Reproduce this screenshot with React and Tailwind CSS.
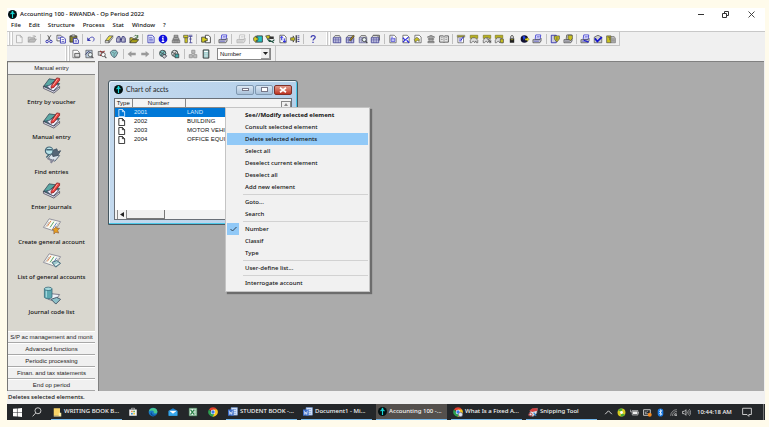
import { useState } from 'react'
import clsx from 'clsx'

/* ---------- small toolbar drawings, all on a 16 grid ---------- */

const Svg = ({ children, className = 'w-[11px] h-[11px]', box = '0 0 16 16' }) => (
  <svg viewBox={box} className={clsx('block shrink-0', className)} aria-hidden="true">{children}</svg>
)

const Page = ({ line = '#444', fill = '#fff' }) => (
  <path d="M3 2h7l3 3v9H3z" fill={fill} stroke={line} strokeWidth="1.2" />
)

const Printer = ({ c = '#2222cc', b = '#444', f = '#c4c4d0' }) => (
  <>
    <path d="M6 1.5h8l-1 7H5z" fill="#fff" stroke={c} strokeWidth="1.2" />
    <path d="M7.5 4h5M7 6h5" stroke={c} strokeWidth=".8" />
    <path d="M1.5 9h11l2-2v4l-2 3h-11z" fill={f} stroke={b} strokeWidth="1.1" />
    <path d="M3 11.5h8" stroke={c} strokeWidth=".8" />
  </>
)

const Ledger = ({ c = '#3a3a90' }) => (
  <>
    <path d="M2 6l3-3.5h7L14 6" fill="#ddd" stroke="#555" strokeWidth="1.2" />
    <path d="M2 6h12v8H2z" fill="#dfe0f0" stroke={c} strokeWidth="1.3" />
    <path d="M2 8.5h12M2 11h12M6 6v8M10 6v8" stroke={c} strokeWidth=".8" />
  </>
)

const Stamp = ({ c = '#666', f = '#b4b4b4' }) => (
  <>
    <path d="M5 2h6v3H5zM4 6h8l1 3H3z" fill={f} stroke={c} strokeWidth="1.2" />
    <path d="M2 10h12v4H2zM5 10v4M8 10v4M11 10v4" fill={f} stroke={c} strokeWidth="1.2" />
  </>
)

const Hand = ({ children }) => (
  <>
    <path d="M2 2h12v5H2z" fill="#b8b020" stroke="#77721c" strokeWidth="1" />
    <path d="M2 10l3-4h5l4 4v4h-2l-1-3-2 3-2-3-3 3H2z" fill="#ddd" stroke="#555" strokeWidth="1.1" />
    {children}
  </>
)

const Lens = ({ c = '#444', f = '#e8f4f4' }) => (
  <>
    <circle cx="10" cy="9" r="3.2" fill={f} stroke={c} strokeWidth="1.3" />
    <path d="M12 11.5l3 3" stroke={c} strokeWidth="1.8" />
  </>
)

const Globe = ({ c = '#3c4444', f = '#7cc4c4' }) => (
  <>
    <circle cx="7.5" cy="7" r="5" fill={f} stroke={c} strokeWidth="1.4" />
    <path d="M3 5l4 2 4-4M5 11l2-4 4 2" stroke={c} strokeWidth="1.2" fill="none" />
  </>
)

const fileTools = [
  [
    ['New', <path d="M4 2h6l3 3v9H4zM10 2v3h3" fill="#f4f4f4" stroke="#aaa" strokeWidth="1.2" />],
    ['Open', <><path d="M2 13V5h4l1 1h5v2" fill="#ccc" stroke="#999" strokeWidth="1.2" /><path d="M2 13l3-5h10l-3 5zM9 3h4l1 2" fill="#bbb" stroke="#999" /></>],
  ],
  [
    ['Cut', <><path d="M6 2l4 8M11 2L6 10" stroke="#444" strokeWidth="1.3" /><circle cx="5" cy="12" r="2" fill="none" stroke="#22a" strokeWidth="1.4" /><circle cx="11" cy="12" r="2" fill="none" stroke="#22a" strokeWidth="1.4" /></>],
    ['Copy', <><path d="M1.5 2h6l2 2v7h-8z" fill="#fff" stroke="#444" strokeWidth="1.2" /><path d="M7 5h5l3 3v6.5H7z" fill="#fff" stroke="#22a" strokeWidth="1.3" /><path d="M3 5h3M3 7h3M9 9h4M9 12h4" stroke="#22a" /></>],
    ['Paste', <><path d="M1.5 3h11v10h-11z" fill="#8a8430" stroke="#333" strokeWidth="1.3" /><path d="M4.5 1.5h5v3h-5z" fill="#ddd" stroke="#333" /><path d="M7 7h5l3 2.5V15H7z" fill="#fff" stroke="#22a" strokeWidth="1.3" /><path d="M9 10h4M9 12.5h4" stroke="#22a" /></>],
  ],
  [['Undo', <><path d="M5 8c2-4 8-4 8 0 0 2-1 3-2 4" fill="none" stroke="#3a3ab0" strokeWidth="1.4" /><path d="M2 5v6h6z" fill="#3a3ab0" /></>]],
  [
    ['Erase', <><path d="M2 11l6-8h6l-6 8z" fill="#e8dc3c" stroke="#555" strokeWidth="1.2" /><path d="M2 11h6v3H2zM8 11l6-8v3l-6 8z" fill="#fff" stroke="#555" strokeWidth="1.2" /></>],
    ['Find', <><path d="M1 7l2-3h3l1 3v6H1zM9 7l1-3h3l2 3v6H9z" fill="#99b" stroke="#333377" strokeWidth="1.2" /><path d="M7 7h2v3H7z" fill="#226" /><path d="M3 8v4M11 8v4" stroke="#fff" /></>],
    ['Load', <><path d="M1.5 14V6h4l1 1.5h6V9" fill="#d8cc30" stroke="#333" strokeWidth="1.2" /><path d="M1.5 14l3-5h11l-4 5z" fill="#a8a018" stroke="#333" strokeWidth="1.2" /><path d="M8 4c2-3 4-2 5 0l1-2v4h-4" fill="none" stroke="#252" strokeWidth="1.2" /></>],
  ],
  [
    ['Document', <><Page line="#3030aa" fill="#dfe4ff" /><path d="M5 6h5M5 8.5h6M5 11h6" stroke="#3030aa" /></>],
    ['Information', <><circle cx="8" cy="8" r="7" fill="#1010dd" /><path d="M8 3v2.2M6.5 7H8v5M6 12h4" stroke="#fff" strokeWidth="1.8" fill="none" /></>],
    ['Stamp', <Stamp />],
    ['Adjust', <><path d="M1 2h7v4H1z" fill="#d4cc20" stroke="#444" /><path d="M3 6h4v8H3z" fill="#d4cc20" stroke="#444" /><path d="M9 2h6M9 4h6M12 4v10M10 14h5M10 8h4" stroke="#3a3a90" strokeWidth="1.2" /></>],
  ],
  [['Transfer', <><path d="M7 2h5l3 3v9H7z" fill="#fff" stroke="#333" strokeWidth="1.3" /><path d="M1 5h6v2h3v4H6v2H1z" fill="#d4cc20" stroke="#333" strokeWidth="1.2" /></>]],
  [['Print', <Printer />]],
  [['Preview', <Printer c="#b4b4b4" b="#aaa" f="#ddd" />]],
  [
    ['Import', <><path d="M6 3h9v10H6z" fill="#22c4c4" stroke="#333" strokeWidth="1.3" /><path d="M1 6l4-3v3h3v4H5v4l-4-4z" fill="#d4cc20" stroke="#333" /></>],
    ['Export', <><path d="M1 3l6-1 2 4-5 2z" fill="#c8c020" stroke="#333" /><path d="M7 4h7v4H7z" fill="#333" /><path d="M6 9l8 5M4 8l3 4h5l3-3" stroke="#254" strokeWidth="1.8" fill="none" /></>],
    ['Sort', <><Page /><path d="M6 4v6M4 6l2-2 2 2M10 7v6M8 11l2 2 3-2" stroke="#1212dd" strokeWidth="1.5" fill="none" /></>],
    ['Move', <><path d="M1 6h4V3l3 5-3 5v-3H1z" fill="#c8c020" stroke="#333" /><path d="M9 2h2v12H9z" fill="#333" /><path d="M12 3h3M12 6h3M12 9h3M12 12h3" stroke="#3a3a90" strokeWidth="1.5" /></>],
  ],
  [['Help', <path d="M5 5.5c0-4 6.5-4 6.5-.5C11.5 7.5 8 7.5 8 10.5M8 12.5v2" fill="none" stroke="#3a3ab0" strokeWidth="2" />]],
]

const accountTools = [
  [
    ['Accounts', <Ledger />],
    ['Edit accounts', <><Ledger /><path d="M7 10l6-8 2 1-6 8z" fill="#c8a020" stroke="#222" /></>],
    ['Search accounts', <><Ledger c="#666699" /><Lens /></>],
    ['Copy accounts', <><path d="M5 2h10v8H5z" fill="#ddd" stroke="#333" strokeWidth="1.2" /><Ledger /></>],
  ],
  [
    ['Report', <><Page line="#555" /><path d="M5 5h3M5 7h6v5H5zM5 9.5h6" stroke="#22c" fill="none" /></>],
    ['Percent', <><Page line="#555" /><path d="M3 6l3 3M3 13l9-8M9 10l4 4" stroke="#2222dd" strokeWidth="1.8" /></>],
    ['Return', <><Page line="#555" /><path d="M2 9l4-4 4 3v4l-3-2-3 3z" fill="#c8c020" stroke="#555" /></>],
    ['Bank', <><path d="M2 5l6-3 6 3zM3 12h10v2H3z" fill="#aaa" stroke="#666" /><path d="M5 6v6M8 6v6M11 6v6M3 8h10" stroke="#666" strokeWidth="1.5" /></>],
    ['Book', <><path d="M1 3h6l1 1 1-1h6v10H9l-1 1-1-1H1z" fill="#eee" stroke="#444" strokeWidth="1.3" /><path d="M8 4v10M3 6h3M3 9h3M10 6h3M10 9h3" stroke="#666" /></>],
  ],
  [
    ['Form', <><path d="M2 2h12v3H2z" fill="#b8b020" stroke="#777" /><path d="M3 5h9v9H3z" fill="#fff" stroke="#444" /><path d="M5 8h4M5 11h4M12 4l-4 6" stroke="#22c" strokeWidth="1.4" /></>],
    ['Receive', <Hand />],
    ['Check', <Hand><path d="M8 7l6 6" stroke="#333" strokeWidth="1.5" /></Hand>],
    ['Pay', <Hand><path d="M10 8h5v6h-5z" fill="#c8c020" stroke="#444" /></Hand>],
    ['Lock', <><path d="M6 7V4c0-2 4-2 4 0v3" stroke="#444" strokeWidth="1.5" fill="none" /><path d="M4.5 7h7v7h-7z" fill="#222" /><path d="M6 9h4" stroke="#c8c020" /></>],
    ['Closing', <><circle cx="7" cy="8" r="6" fill="#111133" /><path d="M4 4l3-1 2 3-3 4z" fill="#2244ee" /><path d="M8 7h3V5l4 3.5L11 12v-2H8z" fill="#e8dc20" stroke="#333" strokeWidth=".5" /></>],
    ['Print journal', <Printer />],
  ],
  [
    ['Budget', <><path d="M2 2h8v12H2z" fill="#ccd" stroke="#22a" strokeWidth="1.3" /><path d="M7 3h8v5l-4 5-4-5z" fill="#c8c020" stroke="#444" /><path d="M11 5v5" stroke="#444" /></>],
    ['Print budget', <><Printer c="#444" /><path d="M8 2h7v5l-3 4-4-4z" fill="#c8c020" stroke="#444" /></>],
  ],
  [
    ['Print ledger', <><Printer /><path d="M6 10l8 3" stroke="#22c" strokeWidth="2" /></>],
    ['Validate', <><path d="M2 5l6-3 6 3v9H2z" fill="#ccc" stroke="#555" strokeWidth="1.2" /><path d="M3 7l4 5 7-7" stroke="#1212cc" strokeWidth="2.8" fill="none" /></>],
    ['Lists', <><path d="M1 3h7v11H1z" fill="#c8c020" stroke="#444" /><path d="M3 5h3v5" stroke="#444" fill="none" /><path d="M8 4h5l2 3v7H8z" fill="#bbb" stroke="#666" /><path d="M9 8h5M9 11h5" stroke="#666" /></>],
  ],
]

const navTools = [
  [
    ['View page', <><Page line="#666" /><path d="M6 7h8v6H6z" fill="#ddd" stroke="#444" strokeWidth="1.3" /></>],
    ['Search page', <><path d="M3 2h10v12H3z" fill="#bcd" stroke="#444" /><path d="M2 9l5-5 5 3" stroke="#336" strokeWidth="1.4" fill="none" /><Lens c="#555" /></>],
    ['Delete page', <><path d="M2 4h8v6H2z" fill="#ccc" stroke="#444" /><path d="M5 3l8 7M12 3l-7 8" stroke="#a03030" strokeWidth="1.8" /><Lens c="#555" f="#fff" /></>],
    ['Refresh', <><path d="M2 5l4-3h5l3 4-3 6-3 2-4-4z" fill="#8cc8c8" stroke="#456" strokeWidth="1.3" /><path d="M5 5l4 2 3-2M8 13V8" stroke="#567" fill="none" /></>],
  ],
  [
    ['Previous', <path d="M1 8l6-5v3h7v4H7v3z" fill="#999" />],
    ['Next', <path d="M15 8L9 3v3H2v4h7v3z" fill="#999" />],
  ],
  [
    ['Link', <><Globe /><path d="M9 8l5 3-4 4-3-3z" fill="#ccc" stroke="#334" strokeWidth="1.2" /></>],
    ['Relink', <><Globe f="#ddd" /><path d="M8 8h6v6H8z" fill="#4aa" stroke="#333" strokeWidth="1.2" /></>],
  ],
  [
    ['Group', <path d="M6 2h5v5H6zM2 9h5v5H2zM9 9h5v5H9z" fill="#bbb" stroke="#999" strokeWidth="1.5" />],
    ['Calculator', <><path d="M3.5 1.5h9v13h-9z" fill="#9cc" stroke="#333" strokeWidth="1.5" /><path d="M5 3h6v2H5z" fill="#fff" /><path d="M5.5 7.5h5M5.5 10h5M5.5 12.5h5" stroke="#eee" /></>],
  ],
]

/* ---------- sidebar drawings, 20 grid ---------- */

const PenBook = () => (
  <>
    <path d="M1 11l7-6 10 3-6 8z" fill="#3c8484" stroke="#345" strokeWidth=".8" />
    <path d="M1 11l6-8 7 1-7 6z" fill="#5aa8a4" stroke="#345" strokeWidth=".8" />
    <path d="M5 11l6-3 6 2-6 6z" fill="#f0f0fa" stroke="#668" strokeWidth=".8" />
    <path d="M1 11l11 5 6-5v2l-6 5-11-5z" fill="#dde" stroke="#334" strokeWidth=".7" />
    <path d="M9 11l6-9 3 .5v2L12 12l-3 1z" fill="#e84040" stroke="#711" strokeWidth=".7" />
    <path d="M11 10l5-7" stroke="#ffb0a0" />
  </>
)

const FindBook = () => (
  <>
    <path d="M9 9l9 1-5 6-7-3z" fill="#dce4ec" stroke="#567" />
    <path d="M10 5l5-2 1 3 3-1-3 5-5 1z" fill="#567" stroke="#456" />
    <circle cx="7" cy="5" r="4" fill="#b8e4ea" stroke="#467" strokeWidth="1.2" />
    <path d="M4 4h6M7 9l-3 3" stroke="#467" strokeWidth="1.5" />
    <path d="M5 13l4 2v3M12 14l-3 4" stroke="#889" strokeWidth="1.5" fill="none" />
  </>
)

const Sheet = ({ children }) => (
  <>
    <path d="M1 12L7 3l12 3-6 10z" fill="#fbfbf4" stroke="#778" strokeWidth=".8" />
    <path d="M5 11l4-6" stroke="#e08040" />
    <path d="M8 12l4-6" stroke="#50a060" />
    <path d="M11 13l4-6" stroke="#6080c0" />
    <path d="M3 12l4-6M13 14l4-7" stroke="#bbb" />
    {children}
  </>
)

const CreateSheet = () => (
  <Sheet><path d="M14 11l1 2h3l-2 2 1 3-3-1-2 2v-4l-2-1 3-1z" fill="#e8a020" stroke="#853" strokeWidth=".6" /></Sheet>
)

const ListSheet = () => (
  <Sheet><path d="M10 12l5-2 4 3-5 4z" fill="#9cc8cc" stroke="#467" /><path d="M13 15l4-2" stroke="#fff" /></Sheet>
)

const JournalCan = () => (
  <>
    <path d="M8 8l10 1-5 7-7-2z" fill="#eef2f8" stroke="#778" />
    <path d="M2 3v9c2 2 6 2 8 0V3z" fill="#5ca8b0" stroke="#367" strokeWidth=".8" />
    <ellipse cx="6" cy="3" rx="4" ry="1.8" fill="#a4d8dc" stroke="#367" strokeWidth=".8" />
    <path d="M9 14l6-2 4 2-5 5z" fill="#8cc0c8" stroke="#456" />
    <path d="M4 5v7" stroke="#b8e4e8" />
  </>
)

const shortcuts = [
  { label: 'Entry by voucher', art: PenBook },
  { label: 'Manual entry', art: PenBook },
  { label: 'Find entries', art: FindBook },
  { label: 'Enter journals', art: PenBook },
  { label: 'Create general account', art: CreateSheet },
  { label: 'List of general accounts', art: ListSheet },
  { label: 'Journal code list', art: JournalCan },
]

const sections = [
  'S/P ac management and monit',
  'Advanced functions',
  'Periodic processing',
  'Finan. and tax statements',
  'End op period',
]

const accounts = [
  { number: '2001', name: 'LAND' },
  { number: '2002', name: 'BUILDING' },
  { number: '2003', name: 'MOTOR VEHI' },
  { number: '2004', name: 'OFFICE EQUI' },
]

const menuGroups = [
  ['See//Modify selected element', 'Consult selected element', 'Delete selected elements', 'Select all',
    'Deselect current element', 'Deselect all', 'Add new element'],
  ['Goto...', 'Search'],
  ['Number', 'Classif', 'Type'],
  ['User-define list...'],
  ['Interrogate account'],
]

const AppMark = ({ className = 'w-[9px] h-[9px]' }) => (
  <Svg className={className}>
    <circle cx="8" cy="8" r="8" fill="#031012" />
    <path d="M8 5v9M4.5 7.5L8 4l3.5 3.5" stroke="#18d8d8" strokeWidth="2" fill="none" />
    <circle cx="8" cy="3" r="1.5" fill="#18d8d8" />
  </Svg>
)

function Grip() {
  return (
    <div className="flex gap-[1px] pl-[1px] shrink-0 self-stretch">
      <span className="w-[2px] border-l border-white bg-[#c8c8c8]" />
      <span className="w-[2px] border-l border-white bg-[#c8c8c8]" />
    </div>
  )
}

function Tools({ groups, className }) {
  return (
    <div className={clsx('flex items-center', className)}>
      {groups.map((group, i) => (
        <div key={i} className="contents">
          {i > 0 && <span className="w-[5px] shrink-0 flex justify-center"><i className="w-px h-[10px] bg-[#c0c0c0]" /></span>}
          {group.map(([label, art]) => (
            <button key={label} type="button" aria-label={label} className="flex-1 min-w-0 h-[12px] flex items-center justify-center">
              <Svg className="w-[10px] h-[10px]">{art}</Svg>
            </button>
          ))}
        </div>
      ))}
    </div>
  )
}

function Sidebar() {
  return (
    <aside className="w-[88px] shrink-0 flex flex-col bg-[#d9d7cf] border-l border-t border-[#777] pt-[1px]">
      <button type="button" className="h-[12px] shrink-0 flex items-center justify-center bg-[#f0f0f0] border-b border-[#8a8a8a] font-['Liberation_Sans'] text-[#222]">
        Manual entry
      </button>
      <nav className="flex-1 flex flex-col">
        {shortcuts.map(({ label, art: Art }) => (
          <button key={label} type="button" className="h-[35px] shrink-0 flex flex-col items-center gap-[3px] pt-[1px] whitespace-nowrap">
            <Svg className="w-[20px] h-[19px]" box="0 0 20 20"><Art /></Svg>
            <span>{label}</span>
          </button>
        ))}
      </nav>
      {sections.map((s) => (
        <button key={s} type="button" className="h-[12px] shrink-0 flex items-center justify-center bg-[#f0f0f0] border-t border-white border-b border-b-[#a8a8a8] whitespace-nowrap font-['Liberation_Sans'] text-[#222]">
          {s}
        </button>
      ))}
    </aside>
  )
}

function AccountsWindow() {
  const [selected, setSelected] = useState('2001')
  return (
    <section className="absolute left-[9px] top-[18px] w-[190px] h-[145px] flex flex-col rounded-t-[3px] border border-[#45565f] bg-gradient-to-r from-[#c3d9ee] to-[#b5d0ea] shadow-[inset_-1px_-1px_0_#4cc8e8,inset_1px_1px_0_#e8f4fc] px-[5px] pb-1">
      <header className="h-[17px] shrink-0 flex items-center">
        <AppMark />
        <h2 className="flex-1 pl-[3px] font-['Lato'] text-[7px] text-[#333]">Chart of accts</h2>
        <div className="flex gap-[1px]">
          <button type="button" aria-label="Minimize" className="w-[18px] h-[10px] rounded-[2px] border border-[#8098b0] bg-gradient-to-b from-[#dce8f4] to-[#a8c0d8] flex items-center justify-center">
            <i className="w-[7px] h-[3px] bg-white border border-[#778]" />
          </button>
          <button type="button" aria-label="Maximize" className="w-[18px] h-[10px] rounded-[2px] border border-[#8098b0] bg-gradient-to-b from-[#dce8f4] to-[#a8c0d8] flex items-center justify-center">
            <i className="w-[7px] h-[5px] bg-white border border-[#778]" />
          </button>
          <button type="button" aria-label="Close" className="w-[18px] h-[10px] rounded-[2px] border border-[#803028] bg-gradient-to-b from-[#e09a8c] to-[#bc3020] flex items-center justify-center">
            <Svg className="w-[8px] h-[6px]" box="0 0 10 8"><path d="M1 1l8 6M9 1L1 7" stroke="#fff" strokeWidth="2.2" /></Svg>
          </button>
        </div>
      </header>
      <div className="relative flex-1 min-h-0 flex flex-col bg-white border border-[#6a7078] overflow-hidden font-['Liberation_Sans'] text-[#111]">
        <table className="w-full table-fixed border-collapse">
          <thead>
            <tr className="h-[8px] bg-[#f4f4f4] leading-[8px]">
              <th scope="col" className="w-[17px] p-0 font-normal border-r border-b border-[#888]">Type</th>
              <th scope="col" className="w-[53px] p-0 font-normal border-r border-b border-[#888]">Number</th>
              <th scope="col" aria-label="Name" className="p-0 border-b border-[#888]" />
            </tr>
          </thead>
          <tbody>
            {accounts.map((a) => (
              <tr key={a.number} onClick={() => setSelected(a.number)}
                className={clsx('h-[9px] leading-[9px] whitespace-nowrap', a.number === selected && 'bg-[#0078d7] text-[#d8ecff]')}>
                <td className="p-0">
                  <Svg className="w-[9px] h-[8px] ml-[2px]" box="0 0 9 9"><path d="M1.5.5h4l2.5 2.5v5.5h-6.5zM5.5.5v2.5h2.5" fill={a.number === selected ? '#0078d7' : '#fff'} stroke={a.number === selected ? '#d8ecff' : '#222'} /></Svg>
                </td>
                <td className="p-0 pl-[2px]">{a.number}</td>
                <td className="p-0 pl-[2px]">{a.name}</td>
              </tr>
            ))}
          </tbody>
        </table>
        <button type="button" aria-label="Scroll up" className="absolute right-0 top-[2px] w-[10px] h-[7px] bg-[#f0f0f0] border border-[#888] flex items-center justify-center">
          <Svg className="w-[4px] h-[3px]" box="0 0 4 3"><path d="M0 3l2-3 2 3z" fill="#888" /></Svg>
        </button>
        <div className="mt-auto h-[9px] flex bg-[#f3f3f3]">
          <button type="button" aria-label="Scroll left" className="ml-[2px] w-[10px] border-l border-r border-[#888] flex items-center justify-center">
            <Svg className="w-[4px] h-[5px]" box="0 0 4 5"><path d="M4 0v5L0 2.5z" fill="#222" /></Svg>
          </button>
          <span className="w-[38px] bg-[#f0f0f0] border-r border-b border-[#777]" />
        </div>
      </div>
    </section>
  )
}

function ContextMenu() {
  const [sortBy] = useState('Number')
  return (
    <div role="menu" className="absolute left-[126px] top-[45px] w-[145px] p-[1px] pb-[2px] bg-[#f1f1f1] border border-[#c4c4c4] shadow-[2px_2px_1px_#6c6c6c] text-[#111]">
      {menuGroups.map((group, g) => (
        <div key={g} role="group">
          {g > 0 && <hr className="ml-[16px] my-[1px] border-0 h-px bg-[#d2d2d2]" />}
          {group.map((label) => (
            <button key={label} type="button" role="menuitem"
              className={clsx('w-full h-[12px] flex items-center text-left whitespace-nowrap',
                label === 'See//Modify selected element' && 'font-bold',
                label === 'Delete selected elements' && 'bg-[#91c9f7]')}>
              <span className={clsx('w-[12px] h-[12px] mr-[6px] flex items-center justify-center', label === sortBy && 'bg-[#91c9f7]')}>
                {label === sortBy && <Svg className="w-[7px] h-[6px]" box="0 0 7 6"><path d="M.5 3l2 2 4-4" fill="none" stroke="#345" /></Svg>}
              </span>
              {label}
            </button>
          ))}
        </div>
      ))}
    </div>
  )
}

/* ---------- Windows taskbar ---------- */

const WordMark = () => (
  <Svg className="w-[10px] h-[10px]"><path d="M5 1h10v12H5z" fill="#dce8fa" stroke="#7aa0e0" /><path d="M8 4h5M8 7h5M8 10h5" stroke="#5a88d0" /><path d="M0 4h9v10H0z" fill="#3a6cc8" /><path d="M2 6l1 6 1.5-4L6 12l1-6" stroke="#fff" fill="none" /></Svg>
)

const Chrome = ({ badge }) => (
  <Svg className="w-[10px] h-[10px]">
    <path d="M8 8L1.5 4A7.5 7.5 0 0 1 14.5 4z" fill="#e04030" />
    <path d="M14.5 4A7.5 7.5 0 0 1 7 15.5L10 8 8 4z" fill="#f8c820" />
    <path d="M1.5 4A7.5 7.5 0 0 0 8 15.5L10 10 5 8z" fill="#2ea050" />
    <circle cx="8" cy="8" r="3.6" fill="#fff" /><circle cx="8" cy="8" r="2.7" fill="#3878e8" />
    {badge && <circle cx="12" cy="12" r="3.5" fill="#dfe4ee" stroke="#556" />}
  </Svg>
)

const Snip = () => (
  <Svg className="w-[10px] h-[10px]"><path d="M1 13l4-9 10-2-1 8-6 5z" fill="#dfe4ea" stroke="#778" /><path d="M2 6l5-4h8v4l-8 2z" fill="#d04040" /><circle cx="4" cy="12" r="2.5" fill="none" stroke="#c03030" strokeWidth="1.5" /><path d="M9 9l4 5" stroke="#3a80c8" strokeWidth="2" /></Svg>
)

const Folder = () => (
  <Svg className="w-[9px] h-[10px]" box="0 0 14 16"><path d="M1 2h10v12H1z" fill="#f8d468" /><path d="M9 9h4v6H1v-1h8z" fill="#fff0a8" /></Svg>
)

const pinned = [
  ['Microsoft Store', <><path d="M2 4h12v10H2z" fill="#f4f4f4" /><path d="M5.5 4V2h5v2" stroke="#ddd" fill="none" /><path d="M5 6h2.5v2.5H5z" fill="#e84" /><path d="M8.5 6H11v2.5H8.5z" fill="#5a4" /><path d="M5 9.5h2.5V12H5z" fill="#28c" /><path d="M8.5 9.5H11V12H8.5z" fill="#eb2" /></>],
  ['Edge', <><circle cx="8" cy="8" r="7" fill="#1878c8" /><path d="M1.5 7C3 0 14 0 15 7c0 4-5 4-6 2 2-3-3-5-7.5-2z" fill="#48c890" /><path d="M6 8c-1 4 3 6 7 4-3 4-9 2-9-2z" fill="#0c4a94" /></>],
  ['Mail', <><path d="M1 6l7-4 7 4v8H1z" fill="#1880d0" /><path d="M2 6h12l-6 5z" fill="#fff" /><path d="M1 14V6l7 5 7-5v8z" fill="#38a8ec" /></>],
  ['Excel', <><path d="M2 2h12v12H2z" fill="#e8f4ec" stroke="#4a9860" /><path d="M10 5h3M10 8h3M10 11h3" stroke="#2a8048" /><path d="M4 4l6 8M10 4l-6 8" stroke="#2a8048" strokeWidth="2" /></>],
]

const tasks = [
  { label: 'STUDENT BOOK -...', icon: <WordMark /> },
  { label: 'Document1 - Mi...', icon: <WordMark /> },
  { label: 'Accounting 100 -...', icon: <AppMark />, active: true },
  { label: 'What Is a Fixed A...', icon: <Chrome badge /> },
  { label: 'Snipping Tool', icon: <Snip /> },
]

const tray = [
  ['Show hidden icons', <path d="M2 11l6-6 6 6" fill="none" stroke="#eee" strokeWidth="1.5" />],
  ['Antivirus', <><circle cx="8" cy="8" r="7" fill="#d8cc20" /><path d="M2 5a7 7 0 0 1 8-4l-2 5zM14 11a7 7 0 0 1-8 4l2-5z" fill="#48a838" /><circle cx="8" cy="8" r="2.5" fill="#fff" /></>],
  ['Battery', <><path d="M5 6h8v5H5z" fill="#eee" /><path d="M4 4.5h10v8H4zM15 7v3M1 3v4h3" stroke="#eee" fill="none" /></>],
  ['Display', <><path d="M1 3h12v10H1z" fill="none" stroke="#ddd" strokeWidth="1.5" /><path d="M4 9l5-4M4 6v4h5" stroke="#ddd" fill="none" /><circle cx="12" cy="12" r="3.5" fill="#f08820" /></>],
  ['Bluetooth', <><rect x="3" y="1" width="10" height="14" rx="5" fill="#1878e0" /><path d="M5.5 5l5 6L8 13V3l2.5 2-5 6" fill="none" stroke="#fff" strokeWidth="1.2" /></>],
  ['Network', <><path d="M3 14A11 11 0 0 1 14 3M6 14a8 8 0 0 1 8-8M9 14a5 5 0 0 1 5-5" fill="none" stroke="#bbb" strokeWidth="1.2" /><circle cx="12.5" cy="12.5" r="1.5" fill="#eee" /></>],
  ['Volume', <><path d="M1 6h3l3-3v10l-3-3H1z" fill="none" stroke="#eee" strokeWidth="1.2" /><path d="M9 6c1 1 1 3 0 4M11 4c2 2 2 6 0 8M13 2c3 3 3 9 0 12" fill="none" stroke="#ccc" strokeWidth="1.1" /></>],
]

function TaskButton({ label, icon, active }) {
  return (
    <button type="button" className={clsx('w-[71px] h-full flex items-center gap-[2px] pl-[2px] border-b border-[#76b9ed] whitespace-nowrap', active && 'bg-[#54504d]')}>
      {icon}{label}
    </button>
  )
}

function Taskbar() {
  return (
    <footer className="h-[16px] shrink-0 flex items-center bg-[#24272a] text-[#f4f4f4]">
      <button type="button" aria-label="Start" className="w-[20px] flex justify-center">
        <Svg className="w-[9px] h-[9px]"><path d="M0 1.5L7 1v6.5H0zM8 1l8-1v7.5H8zM0 8.5h7V15l-7-.5zM8 8.5h8V16l-8-1z" fill="#fff" /></Svg>
      </button>
      <button type="button" aria-label="Search" className="w-[20px] mr-1 flex justify-center">
        <Svg className="w-[10px] h-[10px]"><circle cx="9.5" cy="6" r="4.8" fill="none" stroke="#ddd" strokeWidth="1.4" /><path d="M6 9.5L1 15" stroke="#ddd" strokeWidth="1.4" /></Svg>
      </button>
      <div className="h-full flex"><TaskButton label="WRITING BOOK B..." icon={<Folder />} /></div>
      <div className="flex ml-[1px]">
        {pinned.map(([label, art]) => (
          <button key={label} type="button" aria-label={label} className="w-[20px] flex justify-center"><Svg className="w-[10px] h-[10px]">{art}</Svg></button>
        ))}
        <button type="button" aria-label="Chrome" className="w-[20px] flex justify-center"><Chrome /></button>
      </div>
      <div className="h-full flex gap-1 pl-[3px]">
        {tasks.map((t) => <TaskButton key={t.label} {...t} />)}
      </div>
      <div className="ml-auto flex items-center">
        {tray.map(([label, art]) => (
          <button key={label} type="button" aria-label={label} className="w-[13px] flex justify-center"><Svg className="w-[9px] h-[9px]">{art}</Svg></button>
        ))}
        <time className="pl-1 w-[44px] whitespace-nowrap">10:44:18 AM</time>
        <button type="button" aria-label="Notifications" className="w-[20px] mr-[6px] flex justify-center">
          <Svg className="w-[10px] h-[10px]"><path d="M1 2h14v10h-4v3l-3-3H1z" fill="none" stroke="#ddd" strokeWidth="1.4" /></Svg>
        </button>
        <span className="w-[2px] h-[16px] border-l border-[#777]" />
      </div>
    </footer>
  )
}

export default function App() {
  return (
    <div className="h-screen bg-[#fffbeb] pl-[7px] pr-1 pt-2 pb-[7px] font-['Noto_Sans',sans-serif] font-medium text-[6px] leading-[9px] text-[#111] overflow-hidden">
      <div className="h-full flex flex-col bg-[#f0f0f0]">
        <header className="h-[12px] shrink-0 flex items-center bg-white pl-[1px]">
          <AppMark />
          <h1 className="flex-1 pl-[3px]">Accounting 100 - RWANDA - Op Period 2022</h1>
          <button type="button" aria-label="Minimize" className="w-[25px] flex justify-center"><i className="w-[6px] h-px bg-[#333]" /></button>
          <button type="button" aria-label="Restore" className="w-[25px] flex justify-center">
            <Svg className="w-[7px] h-[7px]" box="0 0 7 7"><path d="M.5 2.5h4v4h-4zM2.5 2.5v-2h4v4h-2" fill="none" stroke="#333" /></Svg>
          </button>
          <button type="button" aria-label="Close" className="w-[27px] flex justify-center">
            <Svg className="w-[7px] h-[7px]" box="0 0 7 7"><path d="M.5.5l6 6M6.5.5l-6 6" stroke="#333" strokeWidth=".9" /></Svg>
          </button>
        </header>
        <nav className="h-[11px] shrink-0 flex items-center gap-2 bg-white pl-1">
          {['File', 'Edit', 'Structure', 'Process', 'Stat', 'Window', '?'].map((m) => (
            <button key={m} type="button">{m}</button>
          ))}
        </nav>

        <div className="h-[15px] shrink-0 flex items-center border-t border-[#c8c8c8]">
          <div className="h-full flex items-center border-b border-r border-[#c4c4c4]">
            <Grip />
            <Tools groups={fileTools} className="w-[306px]" />
            <span className="w-[6px]" />
            <Grip />
            <Tools groups={accountTools} className="w-[286px]" />
            <span className="w-[2px]" />
          </div>
        </div>
        <div className="h-[15px] shrink-0 flex items-center pl-[57px]">
          <div className="h-full flex items-center border-r border-[#c4c4c4] pr-1">
            <Grip />
            <Tools groups={navTools} className="w-[142px] mr-[5px]" />
            <label className="relative block">
              <span className="sr-only">Sort key</span>
              <select className="block appearance-none w-[54px] h-[12px] pl-[2px] py-0 bg-white border border-[#888] font-['Liberation_Sans'] text-[6px] leading-[10px]">
                <option>Number</option>
                <option>Classif</option>
                <option>Type</option>
              </select>
              <span className="absolute right-[1px] top-[1px] w-[9px] h-[10px] bg-[#f0f0f0] border-r border-b border-[#999] flex items-center justify-center pointer-events-none">
                <Svg className="w-[5px] h-[3px]" box="0 0 5 3"><path d="M0 0h5L2.5 3z" fill="#222" /></Svg>
              </span>
            </label>
          </div>
        </div>

        <div className="flex-1 min-h-0 flex gap-[3px]">
          <Sidebar />
          <main className="relative flex-1 bg-[#ababab] border-t border-l border-[#808080] mr-[1px]">
            <AccountsWindow />
            <ContextMenu />
          </main>
        </div>
        <div role="status" className="h-[13px] shrink-0 flex items-center pl-[1px]">Deletes selected elements.</div>
        <Taskbar />
      </div>
    </div>
  )
}
